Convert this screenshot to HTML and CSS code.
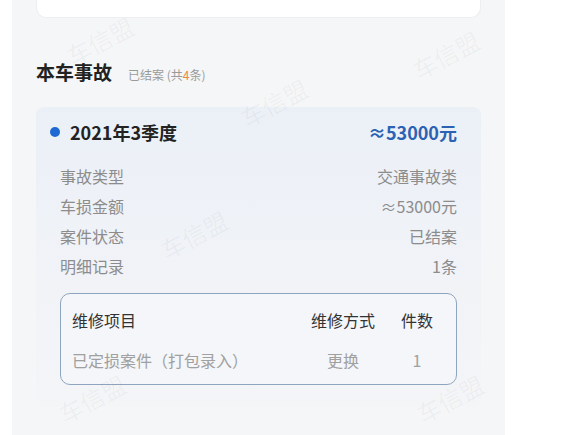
FILE: index.html
```html
<!DOCTYPE html>
<html lang="zh-CN">
<head>
    <meta charset="UTF-8">
    <meta name="viewport" content="width=device-width, initial-scale=1.0">
    <title>本车事故</title>
    <link rel="stylesheet" href="styles.css">
</head>
<body>
    <div class="panel">
        <div class="top-card"></div>

        <div class="section-title">
            <h2>本车事故</h2>
            <span class="sub">已结案 (共<em>4</em>条)</span>
        </div>

        <div class="accident">
            <div class="accident-head">
                <span class="dot"></span>
                <span class="period">2021年3季度</span>
                <span class="amount">≈53000元</span>
            </div>

            <div class="row"><span>事故类型</span><span>交通事故类</span></div>
            <div class="row"><span>车损金额</span><span>≈53000元</span></div>
            <div class="row"><span>案件状态</span><span>已结案</span></div>
            <div class="row"><span>明细记录</span><span>1条</span></div>

            <div class="repair">
                <div class="repair-row head">
                    <span>维修项目</span><span>维修方式</span><span>件数</span>
                </div>
                <div class="repair-row">
                    <span>已定损案件（打包录入）</span><span>更换</span><span>1</span>
                </div>
            </div>
        </div>

        <!-- 水印 -->
        <span class="mark" style="left:52px;top:26px">车信盟</span>
        <span class="mark" style="left:226px;top:88px">车信盟</span>
        <span class="mark" style="left:398px;top:40px">车信盟</span>
        <span class="mark" style="left:146px;top:220px">车信盟</span>
        <span class="mark" style="left:44px;top:384px">车信盟</span>
        <span class="mark" style="left:402px;top:384px">车信盟</span>
    </div>
</body>
</html>
```
FILE: styles.css
```css
body {
    margin: 0;
    background: #fff;
    font-family: "Noto Sans CJK SC", "Noto Sans", sans-serif;
    color: #222;
}

.panel {
    position: relative;
    width: 445px;
    height: 435px;
    margin-left: 12px;
    padding: 0 24px;
    background: #f5f6f7;
    overflow: hidden;
}

.top-card {
    height: 18px;
    background: #fff;
    border: 1px solid #eceef0;
    border-top: none;
    border-radius: 0 0 10px 10px;
    box-sizing: border-box;
}

.section-title {
    display: flex;
    align-items: baseline;
    gap: 16px;
    margin-top: 41px;
}

.section-title h2 {
    margin: 0;
    font-size: 19px;
    line-height: 26px;
    font-weight: 700;
    color: #222;
}

.section-title .sub {
    font-size: 12px;
    color: #9a9a9a;
}

.section-title .sub em {
    font-style: normal;
    color: #f0883a;
}

.accident {
    margin-top: 22px;
    padding: 13px 24px 22px;
    border-radius: 8px;
    background: linear-gradient(180deg, #ebf0f7 0%, #f1f3f7 60%, #f4f5f7 100%);
}

.accident-head {
    display: flex;
    align-items: center;
    margin-left: -10px;
    height: 24px;
    margin-bottom: 17px;
}

.dot {
    width: 10px;
    height: 10px;
    border-radius: 50%;
    background: #1f69d4;
    margin-right: 10px;
}

.period {
    font-size: 18px;
    font-weight: 700;
    color: #222;
}

.amount {
    margin-left: auto;
    font-size: 18px;
    font-weight: 700;
    color: #2b62b3;
}

.row {
    display: flex;
    justify-content: space-between;
    font-size: 16px;
    line-height: 30px;
    color: #8c8c8c;
}

.repair {
    margin-top: 12px;
    padding: 8px 19px 6px 11px;
    border: 1px solid #8ea5c0;
    border-radius: 10px;
    background: #f4f6f9;
    display: flex;
    flex-direction: column;
    gap: 4px;
}

.repair-row {
    display: grid;
    grid-template-columns: 1fr 80px 40px;
    column-gap: 14px;
    height: 36px;
    align-items: center;
    font-size: 16px;
    color: #a0a0a0;
}

.repair-row span + span {
    text-align: center;
}

.repair-row.head {
    color: #333;
}

.mark {
    position: absolute;
    font-size: 24px;
    line-height: 30px;
    font-weight: 400;
    color: rgba(0, 0, 0, 0.04);
    transform: rotate(-28deg);
    pointer-events: none;
    white-space: nowrap;
}
```
